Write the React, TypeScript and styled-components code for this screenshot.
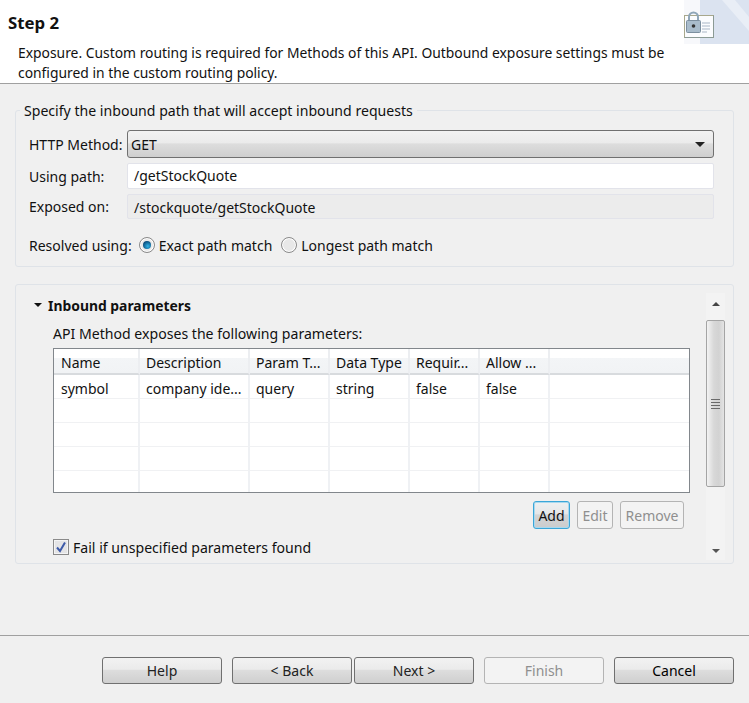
import styled, { createGlobalStyle } from "styled-components";
import { useState } from "react";

const GlobalStyle = createGlobalStyle`
  html, body {
    margin: 0;
    padding: 0;
    background: #f0f0f0;
  }
  * {
    box-sizing: border-box;
  }
`;

const Page = styled.div`
  width: 749px;
  height: 703px;
  display: flex;
  flex-direction: column;
  background: #f0f0f0;
  color: #111;
  font-family: "Noto Sans", "Open Sans", sans-serif;
  font-size: 14px;
  overflow: hidden;
`;

const Header = styled.div`
  position: relative;
  height: 84px;
  background: #fff;
  border-bottom: 1px solid #a0a0a0;
  padding: 13px 18px 0 18px;
  flex: none;
`;

const Title = styled.div`
  font-size: 16.8px;
  font-weight: 700;
  line-height: 20px;
  margin-left: -10px;
  margin-bottom: 10px;
`;

const Description = styled.div`
  font-size: 13.87px;
  line-height: 20px;
  width: 680px;
`;

const Corner = styled.svg`
  position: absolute;
  top: 0;
  right: 0;
`;

const Content = styled.div`
  flex: 1;
  padding: 26px 15px 0;
  display: flex;
  flex-direction: column;
  gap: 17px;
`;

const Group = styled.div`
  position: relative;
  height: 157px;
  border: 1px solid #dfe3e8;
  border-radius: 3px;
  padding: 19px 19px 0 13px;
  display: flex;
  flex-direction: column;
`;

const Legend = styled.div`
  position: absolute;
  top: -9px;
  left: 4px;
  padding: 0 4px;
  background: #f0f0f0;
  font-size: 14.1px;
  line-height: 18px;
`;

const Row = styled.div<{ $h: number; $mb: number }>`
  display: flex;
  align-items: center;
  height: ${(p) => p.$h}px;
  margin-bottom: ${(p) => p.$mb}px;
`;

const FieldLabel = styled.div`
  width: 98px;
  flex: none;
  white-space: nowrap;
`;

const Select = styled.div`
  flex: 1;
  height: 100%;
  display: flex;
  align-items: center;
  justify-content: space-between;
  padding: 0 8px 0 3px;
  border: 1px solid #707070;
  border-radius: 3px;
  background: linear-gradient(#f2f2f2 0%, #ebebeb 45%, #dddddd 50%, #cfcfcf 100%);
`;

const Arrow = styled.span<{ $dir: "up" | "down"; $size: number; $color: string }>`
  width: 0;
  height: 0;
  border-left: ${(p) => p.$size}px solid transparent;
  border-right: ${(p) => p.$size}px solid transparent;
  ${(p) => (p.$dir === "down" ? "border-top" : "border-bottom")}: ${(p) => p.$size}px solid ${(p) => p.$color};
`;

const TextBox = styled.div<{ $readOnly?: boolean }>`
  flex: 1;
  height: 100%;
  display: flex;
  align-items: center;
  padding-left: 6px;
  padding-top: ${(p) => (p.$readOnly ? "1px" : "0")};
  padding-bottom: ${(p) => (p.$readOnly ? "0" : "1px")};
  border: 1px solid #e2e3ea;
  border-radius: 2px;
  background: ${(p) => (p.$readOnly ? "#ececec" : "#fff")};
`;

const RadioRow = styled.div`
  display: flex;
  align-items: center;
  height: 20px;
  margin-top: 16px;
`;

const RadioLabel = styled.span`
  margin-right: 7px;
`;

const RadioOption = styled.span`
  display: inline-flex;
  align-items: center;
  gap: 4px;
  margin-right: 9px;
`;

const RadioMark = styled.span<{ $on?: boolean }>`
  width: 16px;
  height: 16px;
  border-radius: 50%;
  border: 1px solid #8a8a8a;
  display: inline-flex;
  align-items: center;
  justify-content: center;
  background: #e8e8e8;
  box-shadow: inset 0 0 0 1px #fff;
  &::after {
    content: "";
    display: ${(p) => (p.$on ? "block" : "none")};
    width: 8px;
    height: 8px;
    border-radius: 50%;
    background: radial-gradient(circle at 60% 65%, #2fb4e8, #0b4f7e 70%);
  }
`;

const ParamsPanel = styled.div`
  height: 280px;
  border: 1px solid #dfe3e8;
  border-radius: 3px;
  display: flex;
  padding: 8px 8px 3px 0;
`;

const ParamsBody = styled.div`
  flex: 1;
  display: flex;
  flex-direction: column;
`;

const SectionHead = styled.div`
  display: flex;
  align-items: center;
  gap: 6px;
  height: 26px;
  padding-left: 18px;
  padding-bottom: 2px;
  font-weight: 700;
  font-size: 13.9px;
`;

const SectionHint = styled.div`
  margin: 6px 0 0 37px;
  font-size: 14.1px;
  line-height: 18px;
  white-space: nowrap;
`;

const TableWrap = styled.div`
  margin: 5px 16px 0 37px;
  height: 145px;
  border: 1px solid #82878c;
  background: #fff;
  overflow: hidden;
`;

const TableGrid = styled.div`
  display: grid;
  grid-template-columns: 86px 110px 80px 80px 70px 70px 1fr;
  grid-template-rows: 26px repeat(5, 24px);
`;

const HeadCell = styled.div`
  display: flex;
  align-items: center;
  padding: 3px 0 0 6px;
  border-right: 2px solid #eceef1;
  border-bottom: 2px solid #d8dbde;
  background: linear-gradient(#fff 0%, #fff 36%, #f3f5f7 37%, #f1f3f5 100%);
  white-space: nowrap;
  &:nth-child(7n + 1) {
    padding-left: 7px;
  }
  &:nth-child(7n) {
    border-right: none;
  }
`;

const Cell = styled.div`
  display: flex;
  align-items: center;
  padding: 3px 0 0 6px;
  border-right: 2px solid #eff1f4;
  border-bottom: 1px solid #f0f1f3;
  white-space: nowrap;
  &:nth-child(7n + 1) {
    padding-left: 7px;
  }
  &:nth-child(7n) {
    border-right: none;
  }
`;

const TableButtons = styled.div`
  display: flex;
  justify-content: flex-end;
  gap: 7px;
  margin: 8px 22px 0 0;
`;

const SmallButton = styled.div<{ $w: number; $focus?: boolean; $off?: boolean }>`
  width: ${(p) => p.$w}px;
  height: 28px;
  display: flex;
  align-items: center;
  justify-content: center;
  border-radius: 3px;
  border: 1px solid ${(p) => (p.$focus ? "#3aa6d8" : "#b4b4b4")};
  color: ${(p) => (p.$off ? "#8f8f8f" : "#111")};
  background: ${(p) =>
    p.$focus
      ? "linear-gradient(#eef0f1 0%, #e6e7e8 45%, #d3d4d5 50%, #cbcccd 100%)"
      : "#f3f3f3"};
  box-shadow: ${(p) => (p.$focus ? "inset 0 0 0 1px #a9d8ee" : "none")};
`;

const CheckRow = styled.div`
  display: flex;
  align-items: center;
  gap: 4px;
  margin: 8px 0 0 37px;
  height: 20px;
  font-size: 14.1px;
  white-space: nowrap;
`;

const CheckMark = styled.span`
  width: 16px;
  height: 16px;
  border: 1px solid #8a8a8a;
  background: #e4e4e6;
  box-shadow: inset 0 0 0 1px #f4f4f4;
  display: inline-flex;
  align-items: center;
  justify-content: center;
`;

const Scrollbar = styled.div`
  width: 19px;
  display: flex;
  flex-direction: column;
  background: #f3f3f3;
`;

const ScrollEnd = styled.div<{ $h: number; $pb?: number }>`
  height: ${(p) => p.$h}px;
  padding-bottom: ${(p) => p.$pb ?? 0}px;
  display: flex;
  align-items: center;
  justify-content: center;
  flex: none;
`;

const ScrollThumb = styled.div`
  height: 167px;
  flex: none;
  border: 1px solid #a4a4a4;
  border-radius: 2px;
  background: linear-gradient(90deg, #f3f3f3 0%, #d8d8d8 40%, #d2d2d2 70%, #e4e4e4 100%);
  display: flex;
  flex-direction: column;
  align-items: center;
  justify-content: center;
  gap: 2px;
`;

const Grip = styled.span`
  width: 9px;
  height: 1px;
  background: #6a6a6a;
`;

const ScrollTrack = styled.div`
  flex: 1;
`;

const Footer = styled.div`
  flex: none;
  height: 68px;
  border-top: 1px solid #a0a0a0;
  padding: 21px 15px 0 102px;
  display: flex;
`;

const WizardButton = styled.div<{ $ml?: number; $off?: boolean; $dark?: boolean }>`
  width: 120px;
  height: 27px;
  margin-left: ${(p) => p.$ml ?? 0}px;
  display: flex;
  align-items: center;
  justify-content: center;
  border-radius: 3px;
  border: 1px solid ${(p) => (p.$off ? "#b4b4b4" : "#707070")};
  color: ${(p) => (p.$off ? "#8f8f8f" : p.$dark ? "#000" : "#222")};
  background: ${(p) =>
    p.$off
      ? "#f3f3f3"
      : "linear-gradient(#f2f2f2 0%, #ebebeb 45%, #dddddd 50%, #cfcfcf 100%)"};
`;

const columns = ["Name", "Description", "Param T...", "Data Type", "Requir...", "Allow ...", ""];
const firstRow = ["symbol", "company ide...", "query", "string", "false", "false", ""];

export default function App() {
  const [emptyRows] = useState(4);

  return (
    <Page>
      <GlobalStyle />
      <Header>
        <Title>Step 2</Title>
        <Description>
          Exposure. Custom routing is required for Methods of this API. Outbound exposure settings must be
          configured in the custom routing policy.
        </Description>
        <Corner width="70" height="44" viewBox="0 0 70 44">
          <rect x="5" y="0" width="16" height="44" fill="#f7f8fb" />
          <rect x="21" y="0" width="49" height="44" fill="#dbe3f0" />
          <path d="M43 0 L56 0 L70 17 L70 31 Z" fill="#e9eef6" />
          <rect x="5.5" y="15.5" width="29" height="22" fill="#fbfcfe" stroke="#a8a88c" />
          <path d="M34.5 15.5v22h-29" fill="none" stroke="#8b9a94" />
          <path d="M23 23h8M23 26h8M23 29h8M23 32h5" stroke="#a9b6c6" strokeWidth="1" />
          <path d="M10 21v-4a4.500 4.500 0 0 1 9 0v4" fill="none" stroke="#8fa6b8" strokeWidth="2" />
          <rect x="7.500" y="20.500" width="14" height="12" rx="1" fill="#a9bccb" stroke="#7c8f9f" />
          <circle cx="14.500" cy="26" r="1.800" fill="#333" />
        </Corner>
      </Header>

      <Content>
        <Group>
          <Legend>Specify the inbound path that will accept inbound requests</Legend>
          <Row $h={28} $mb={5}>
            <FieldLabel>HTTP Method:</FieldLabel>
            <Select>
              GET
              <Arrow $dir="down" $size={5} $color="#222" />
            </Select>
          </Row>
          <Row $h={26} $mb={5}>
            <FieldLabel>Using path:</FieldLabel>
            <TextBox>/getStockQuote</TextBox>
          </Row>
          <Row $h={25} $mb={0}>
            <FieldLabel>Exposed on:</FieldLabel>
            <TextBox $readOnly>/stockquote/getStockQuote</TextBox>
          </Row>
          <RadioRow>
            <RadioLabel>Resolved using:</RadioLabel>
            <RadioOption>
              <RadioMark $on />
              Exact path match
            </RadioOption>
            <RadioOption>
              <RadioMark />
              Longest path match
            </RadioOption>
          </RadioRow>
        </Group>

        <ParamsPanel>
          <ParamsBody>
            <SectionHead>
              <Arrow $dir="down" $size={4} $color="#111" />
              Inbound parameters
            </SectionHead>
            <SectionHint>API Method exposes the following parameters:</SectionHint>
            <TableWrap>
              <TableGrid>
                {columns.map((c, i) => (
                  <HeadCell key={i}>{c}</HeadCell>
                ))}
                {firstRow.map((c, i) => (
                  <Cell key={i}>{c}</Cell>
                ))}
                {Array.from({ length: emptyRows * 7 }).map((_, i) => (
                  <Cell key={i} />
                ))}
              </TableGrid>
            </TableWrap>
            <TableButtons>
              <SmallButton $w={37} $focus>
                Add
              </SmallButton>
              <SmallButton $w={36} $off>
                Edit
              </SmallButton>
              <SmallButton $w={64} $off>
                Remove
              </SmallButton>
            </TableButtons>
            <CheckRow>
              <CheckMark>
                <svg width="12" height="12" viewBox="0 0 12 12">
                  <path d="M2 6.500 L5 10 L10 1.500" fill="none" stroke="#3d5aa8" strokeWidth="2" />
                </svg>
              </CheckMark>
              Fail if unspecified parameters found
            </CheckRow>
          </ParamsBody>
          <Scrollbar>
            <ScrollEnd $h={27} $pb={5}>
              <Arrow $dir="up" $size={4} $color="#444" />
            </ScrollEnd>
            <ScrollThumb>
              <Grip />
              <Grip />
              <Grip />
              <Grip />
            </ScrollThumb>
            <ScrollTrack />
            <ScrollEnd $h={18}>
              <Arrow $dir="down" $size={4} $color="#555" />
            </ScrollEnd>
          </Scrollbar>
        </ParamsPanel>
      </Content>

      <Footer>
        <WizardButton>Help</WizardButton>
        <WizardButton $ml={10}>&lt; Back</WizardButton>
        <WizardButton $ml={2}>Next &gt;</WizardButton>
        <WizardButton $ml={10} $off>
          Finish
        </WizardButton>
        <WizardButton $ml={10} $dark>
          Cancel
        </WizardButton>
      </Footer>
    </Page>
  );
}
